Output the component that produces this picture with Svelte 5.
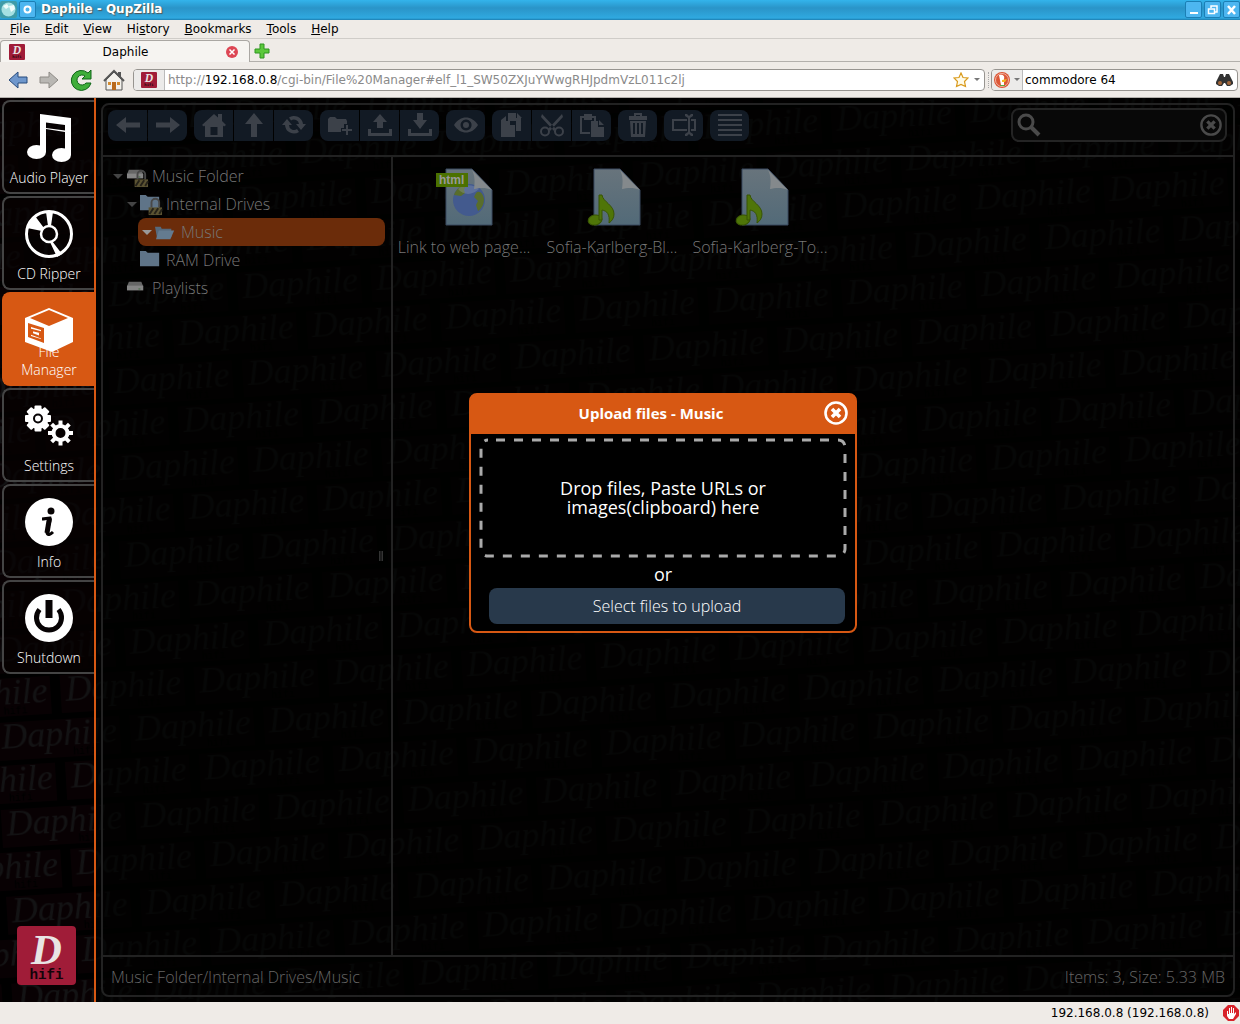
<script lang="ts">
  type Item = { label: string; icon: string };

  const menus = ['File', 'Edit', 'View', 'History', 'Bookmarks', 'Tools', 'Help'];
  // position of the underlined access key in each menu title
  const accessKey: Record<string, number> = { History: 2 };

  const sections: Item[] = [
    { label: 'Audio Player', icon: 'music' },
    { label: 'CD Ripper', icon: 'disc' },
    { label: 'File Manager', icon: 'box' },
    { label: 'Settings', icon: 'gears' },
    { label: 'Info', icon: 'info' },
    { label: 'Shutdown', icon: 'power' }
  ];

  const toolGroups = [
    ['back', 'forward'],
    ['home', 'up', 'reload'],
    ['newfolder', 'upload', 'download'],
    ['view'],
    ['copy', 'cut', 'paste'],
    ['trash'],
    ['rename'],
    ['list']
  ];

  const tree = [
    { label: 'Music Folder', level: 0, kind: 'drive', open: true, locked: true },
    { label: 'Internal Drives', level: 1, kind: 'folder', open: true, locked: true },
    { label: 'Music', level: 2, kind: 'openfolder', open: true, locked: false },
    { label: 'RAM Drive', level: 1, kind: 'folder', open: false, locked: false },
    { label: 'Playlists', level: 0, kind: 'drive', open: false, locked: false }
  ];

  const files = [
    { name: 'Link to web page...', kind: 'html' },
    { name: 'Sofia-Karlberg-Bl...', kind: 'audio' },
    { name: 'Sofia-Karlberg-To...', kind: 'audio' }
  ];

  const teeth = [0, 45, 90, 135, 180, 225, 270, 315];

  let current = $state('File Manager');
  let selected = $state('Music');
  let address = $state('');
  let query = $state('commodore 64');
  let dialogOpen = $state(true);
</script>

{#snippet favicon()}
  <svg class="favicon" viewBox="0 0 58 58" aria-hidden="true">
    <rect width="58" height="58" rx="4" fill="#a01c38" />
    <text x="29" y="37" class="logo-d" text-anchor="middle">D</text>
    <text x="29" y="52" class="logo-hifi" text-anchor="middle">hifi</text>
  </svg>
{/snippet}

{#snippet closeIcon(size: number)}
  <svg width={size} height={size} viewBox="0 0 24 24" fill="none" stroke="currentColor" aria-hidden="true">
    <circle cx="12" cy="12" r="10.5" stroke-width="2.6" />
    <path d="M8 8l8 8M16 8l-8 8" stroke-width="3.600" />
  </svg>
{/snippet}

{#snippet sectionIcon(name: string)}
  <svg class="section-icon" viewBox="0 0 48 48" aria-hidden="true" fill="#fff">
    {#if name === 'music'}
      <path fill-rule="evenodd" d="M15 0L46 4V41H40V18L21 15V38H15ZM21 8.500V14L40 16.500V11Z" />
      <ellipse cx="11.500" cy="38" rx="9.500" ry="7" />
      <ellipse cx="36.500" cy="41" rx="9.500" ry="7" />
    {:else if name === 'disc'}
      <circle cx="24" cy="24" r="22.500" fill="none" stroke="#fff" stroke-width="3" />
      <circle cx="24" cy="24" r="8" fill="none" stroke="#fff" stroke-width="2.500" />
      <path d="M21 2h7l-2 14h-3zM10 6L19 18 17 21 2 18zM27 31l10 13-5 3-7-15z" />
    {:else if name === 'box'}
      <path d="M24 2L48 12V36L27 46 0 36V12Z" />
      <path fill="#d75813" d="M24 4L43 12 24 20 5 12ZM3 17L19 22V37L3 31Z" />
      <path d="M6 21l10 3v9l-10-3z" />
      <path fill="#d75813" d="M6 21l10 3v9l-10-3z" opacity="0" />
      <path fill="none" stroke="#d75813" stroke-width="2" d="M7 24l8 2v5l-8-3z" />
    {:else if name === 'gears'}
      <circle cx="13" cy="16.500" r="10.500" />
      {#each teeth as a}
        <rect x="9.500" y="3.500" width="7" height="6" rx="1" transform="rotate({a} 13 16.500)" />
      {/each}
      <circle cx="13" cy="16.500" r="4" fill="#fff" stroke="#070304" stroke-width="2" />
      <circle cx="35.500" cy="31" r="7" fill="none" stroke="#fff" stroke-width="4" />
      {#each teeth as a}
        <rect x="33.500" y="18.500" width="4" height="6" transform="rotate({a} 35.500 31)" />
      {/each}
    {:else if name === 'info'}
      <circle cx="24" cy="24" r="24" />
      <circle cx="26" cy="13" r="3.500" fill="#070304" />
      <path fill="none" stroke="#070304" stroke-width="3" d="M17 21c3 0 5-1 8-1 1 5-4 11-3 15 1 3 4 1 6-1" />
      <path fill="none" stroke="#070304" stroke-width="5" d="M24.500 20L22 35" />
    {:else}
      <circle cx="24" cy="24" r="24" />
      <path fill="none" stroke="#070304" stroke-width="5" d="M14.500 15.500A12.500 12.500 0 1 0 33.500 15.500" />
      <path fill="#070304" d="M20.500 6h7v18h-7z" />
    {/if}
  </svg>
{/snippet}

{#snippet toolIcon(name: string)}
  <svg width="24" height="24" viewBox="0 0 24 24" fill="currentColor" stroke="none" aria-hidden="true">
    {#if name === 'back'}
      <path d="M0 12L10 4v5.500h14v5H10V20z" />
    {:else if name === 'forward'}
      <path d="M24 12L14 4v5.500H0v5h14V20z" />
    {:else if name === 'home'}
      <path fill-rule="evenodd" d="M0 12L12 1l4 3.500V1h4v7l4 4-2 1.500-1-1V24H3V12.500l-1 1zM8.500 14v8h7v-8z" />
    {:else if name === 'up'}
      <path d="M12 0l9 11h-6v13H9V11H3z" />
    {:else if name === 'reload'}
      <path d="M0 12l5-6 5 6H7a5 5 0 0 0 8 4l2 3A9 9 0 0 1 3 12zM24 11l-5 6-5-6h3a5 5 0 0 0-8-3.500L7 4.500A9 9 0 0 1 21 11z" />
    {:else if name === 'newfolder'}
      <path d="M0 6l2-2h5l2 2h9l1 2v3h-3v4h-3v4H1L0 19z" />
      <path d="M18 12h2v4h4v2h-4v4h-2v-4h-4v-2h4z" />
    {:else if name === 'upload'}
      <path d="M12 1l7 8h-4v6H9V9H5zM0 16h3v4h18v-4h3v7H0z" />
    {:else if name === 'download'}
      <path d="M9 0h6v7h4l-7 9-7-9h4zM0 16h3v4h18v-4h3v7H0z" />
    {:else if name === 'view'}
      <path fill-rule="evenodd" d="M0 12C6 2 18 2 24 12 18 22 6 22 0 12zM12 6.500a5.500 5.500 0 1 0 .1 0z" />
      <circle cx="12" cy="12" r="3" />
    {:else if name === 'copy'}
      <path d="M8 0h8v5h5v13h-5V8H8zM17 0l5 5h-5zM1 7l5-4v5h4v4h5v12H1z" />
    {:else if name === 'cut'}
      <path d="M2 1l14 15-2 2L1 4zM22 1L8 16l2 2L23 4z" />
      <g fill="none" stroke="currentColor" stroke-width="2">
        <circle cx="5" cy="18.500" r="4" />
        <circle cx="19" cy="18.500" r="4" />
      </g>
    {:else if name === 'paste'}
      <path d="M0 3h4V1h8v2h4v5h-2V5h-2v2H4V5H2v14h8v2H0z" />
      <path d="M11 8h7v6h6v10H11zM19 7l5 5h-5z" />
    {:else if name === 'trash'}
      <path fill-rule="evenodd" d="M3 3h5V0h8v3h5v4H3zM10 2v1h4V2zM4 8h16l-1 16H5zM7 10v11h2V10zm4 0v11h2V10zm4 0v11h2V10z" />
    {:else if name === 'rename'}
      <path fill-rule="evenodd" d="M0 6h15v2H2v8h13v2H0zM19 6h5v12h-5v-2h3V8h-3z" />
      <path d="M13 1h2l2 2 2-2h2v2l-3 2v14l3 2v2h-2l-2-2-2 2h-2v-2l3-2V5l-3-2z" />
    {:else}
      <path d="M0 1h24v2H0zM0 6h24v2H0zM0 11h24v2H0zM0 16h24v2H0zM0 21h24v2H0z" />
    {/if}
  </svg>
{/snippet}

{#snippet treeIcon(kind: string, locked: boolean)}
  <svg class="tree-icon" viewBox="0 0 24 24" aria-hidden="true">
    {#if kind === 'drive'}
      <path fill="#666" d="M3 5h13l2 5H1z" />
      <path fill="#858585" d="M1 9h17v5H1z" />
      <path fill="#3a6a3a" d="M13 12h2v1h-2z" />
    {:else if kind === 'folder'}
      <path fill="#5f7488" d="M0 2h6l2 2h12v14H0z" />
    {:else}
      <path fill="#566a7d" d="M0 6h6l1 2h10v9H2z" />
      <path fill="#647b90" d="M4 10h16l-4 9H1z" />
    {/if}
    {#if locked}
      <path fill="none" stroke="#484848" stroke-width="2" d="M12 15v-5a4 4 0 0 1 8 0v5" />
      <path fill="#5b5332" d="M9 15h14v8H9z" />
      <path stroke="#26231a" stroke-width="2" d="M10 22l4-6M15 22l4-6M20 22l3-5" />
    {/if}
  </svg>
{/snippet}

<div class="window">
  <header class="titlebar">
    <svg width="17" height="17" viewBox="0 0 17 17" aria-hidden="true">
      <rect width="17" height="17" rx="2" fill="#3f9ba8" />
      <circle cx="8.500" cy="8.500" r="7" fill="#a5e0e2" />
      <path fill="#effcfb" d="M3 5l4-2 2 3-3 2zM9 5l5-1 1 4-4 3z" />
    </svg>
    <button class="wm" aria-label="Window menu">
      <svg width="15" height="15" viewBox="0 0 15 15"><circle cx="7.500" cy="7.500" r="3" fill="none" stroke="#fff" stroke-width="2" /></svg>
    </button>
    <span class="title">Daphile - QupZilla</span>
    <button class="wm" aria-label="Minimize">
      <svg width="15" height="15" viewBox="0 0 15 15"><path d="M4 10h8v2H4z" fill="#fff" /></svg>
    </button>
    <button class="wm" aria-label="Restore">
      <svg width="15" height="15" viewBox="0 0 15 15" fill="none" stroke="#fff"><path d="M6 6V4h6v6h-2M3.500 7h6v4.500h-6z" stroke-width="1.500" /></svg>
    </button>
    <button class="wm" aria-label="Close">
      <svg width="15" height="15" viewBox="0 0 15 15"><path d="M4 4l7 8M11 4l-7 8" stroke="#fff" stroke-width="2.500" /></svg>
    </button>
  </header>

  <nav class="menubar" aria-label="Menu">
    {#each menus as menu}
      {@const k = accessKey[menu] ?? 0}
      <button>{menu.slice(0, k)}<u>{menu[k]}</u>{menu.slice(k + 1)}</button>
    {/each}
  </nav>

  <div class="tabs">
    <div class="tab">
      {@render favicon()}
      <span>Daphile</span>
      <button aria-label="Close tab">
        <svg width="12" height="12" viewBox="0 0 12 12"><circle cx="6" cy="6" r="6" fill="#dd4654" /><path d="M3.500 3.500l5 5M8.500 3.500l-5 5" stroke="#fff" stroke-width="1.500" /></svg>
      </button>
    </div>
    <button class="newtab" aria-label="New tab">
      <svg width="16" height="16" viewBox="0 0 16 16"><path d="M6 1h4v5h5v4h-5v5H6v-5H1V6h5z" fill="#5cc83c" stroke="#2f9420" /></svg>
    </button>
  </div>

  <div class="navbar">
    <button aria-label="Back">
      <svg width="20" height="20" viewBox="0 0 20 20"><path d="M1 10l9-8v5h9v6h-9v5z" fill="#6f97cc" stroke="#274a7c" /></svg>
    </button>
    <button aria-label="Forward">
      <svg width="20" height="20" viewBox="0 0 20 20"><path d="M19 10l-9-8v5H1v6h9v5z" fill="#b9b7b3" stroke="#8e8b86" /></svg>
    </button>
    <button aria-label="Reload">
      <svg width="22" height="22" viewBox="0 0 22 22"><path d="M21 1v9h-9l3-3a5 5 0 1 0 1 7h5A10 10 0 1 1 18 4z" fill="#3fae3a" stroke="#11661a" /></svg>
    </button>
    <button aria-label="Home">
      <svg width="22" height="22" viewBox="0 0 22 22">
        <path d="M15 3h3v6h-3z" fill="#555" />
        <path d="M3 11l8-8 8 8v10H3z" fill="#f3f1ec" stroke="#555" />
        <path d="M1 12L11 2l10 10" fill="none" stroke="#555" stroke-width="2" />
        <path d="M9 13h4v8H9z" fill="#b96a1d" /><path d="M5 13h3v3H5zM14 13h3v3h-3z" fill="#d48b30" />
      </svg>
    </button>
    <div class="field address">
      <span class="cap">{@render favicon()}</span>
      <div class="edit">
        <span class="url">http://<b>192.168.0.8</b>/cgi-bin/File%20Manager#elf_l1_SW50ZXJuYWwgRHJpdmVzL011c2lj</span>
        <input type="text" aria-label="Address" bind:value={address} />
      </div>
      <svg width="16" height="16" viewBox="0 0 16 16" aria-hidden="true"><path d="M8 1l2 4.500 5 .5-3.500 3.500 1 5L8 12.500 3.500 14.500l1-5L1 6l5-.5z" fill="#fffbe8" stroke="#d99a1c" stroke-width="1.200" /></svg>
      <span class="caret"></span>
    </div>
    <span class="grip"></span>
    <div class="field websearch">
      <span class="cap">
        <svg width="16" height="16" viewBox="0 0 16 16" aria-hidden="true">
          <circle cx="8" cy="8" r="8" fill="#dc5636" /><circle cx="8" cy="8" r="6.500" fill="none" stroke="#f1b5a3" />
          <path d="M5 3c4-1 6 1 5 4v6H7z" fill="#fff" /><path d="M8 8l5-1-2 3H8z" fill="#f5b820" /><path d="M6 13h5v1H6z" fill="#5aa83e" />
        </svg>
        <span class="caret"></span>
      </span>
      <input type="text" aria-label="Web search" bind:value={query} />
      <svg width="17" height="14" viewBox="0 0 17 14" aria-hidden="true">
        <path d="M4 1h3l1 3h1l1-3h3l4 8v2l-3 2h-3l-2-3H8l-2 3H3l-3-2V9z" fill="#333" />
        <circle cx="4" cy="10" r="2" fill="#a5673a" /><circle cx="13" cy="10" r="2" fill="#a5673a" />
      </svg>
    </div>
  </div>

  <main class="page">
    <svg class="wall" width="100%" height="100%" aria-hidden="true">
      <defs>
        <pattern id="bricks" width="134" height="87" patternUnits="userSpaceOnUse" patternTransform="translate(129 615) rotate(-3.500)">
          {#each [[0, 0], [67, 43], [-67, 43]] as [x, y]}
            <g transform="translate({x} {y})">
              <rect x="0" y="2" width="124" height="38" fill="#080103" />
              <text x="5" y="28" class="brick-name">Daphile</text>
              <text x="76" y="38" class="brick-hifi">hifi</text>
            </g>
          {/each}
        </pattern>
      </defs>
      <rect width="100%" height="100%" fill="url(#bricks)" />
    </svg>

    <nav class="sidebar" aria-label="Sections">
      {#each sections as s}
        <button class="section" class:active={s.label === current} onclick={() => (current = s.label)}>
          {@render sectionIcon(s.icon)}
          <span>{s.label}</span>
        </button>
      {/each}
      <a class="brand" href="#about" aria-label="Daphile">{@render favicon()}</a>
    </nav>

    <div class="content">
      <div class="manager">
        <div class="toolbar">
          {#each toolGroups as group}
            <div class="group">
              {#each group as tool}
                <button aria-label={tool}>{@render toolIcon(tool)}</button>
              {/each}
            </div>
          {/each}
          <div class="search">
            <svg width="24" height="24" viewBox="0 0 24 24" fill="none" stroke="currentColor" aria-hidden="true">
              <circle cx="9" cy="9" r="7" stroke-width="3" />
              <path d="M14 14l8 8" stroke-width="4" />
            </svg>
            <input type="text" aria-label="Search files" />
            <button aria-label="Clear search">{@render closeIcon(22)}</button>
          </div>
        </div>

        <div class="panes">
          <div class="tree">
            {#each tree as node}
              <button class="node level{node.level}" class:selected={node.label === selected} onclick={() => (selected = node.label)}>
                <span class="arrow" class:hidden={!node.open}></span>
                {@render treeIcon(node.kind, node.locked)}
                <span>{node.label}</span>
              </button>
            {/each}
            <span class="splitter"></span>
          </div>

          <div class="files">
            {#each files as file}
              <button class="file">
                <svg width="60" height="60" viewBox="0 0 60 60" aria-hidden="true">
                  <defs>
                    <linearGradient id="sheet" x1="0" y1="0" x2="0" y2="1">
                      <stop offset="0" stop-color="#68747c" /><stop offset="1" stop-color="#526a78" />
                    </linearGradient>
                  </defs>
                  <path d="M12 2h26l20 21v35H12z" fill="url(#sheet)" stroke="#3b4a61" />
                  {#if file.kind === 'html'}
                    <circle cx="35" cy="33" r="16" fill="#435a8e" />
                    <path d="M20 28c2-6 7-10 12-10l-2 5 1 3-4 3zM42 26c3-3 7 0 8 6 0 6-3 10-6 12l-2-6 2-4-4-4z" fill="#596d2b" />
                    <path d="M24 22c6-5 15-5 21 0-6 6-15 7-21 0z" fill="#9ba7bc" opacity=".3" />
                  {/if}
                  <path d="M38 3l20 20c-7-3-13-2-18-1 1-7 1-13-2-19z" fill="#84898c" />
                  {#if file.kind === 'html'}
                    <path d="M2 6h32v14H2z" fill="#4b7100" />
                    <text x="5" y="17" class="html-tag">html</text>
                  {:else}
                    <ellipse cx="13" cy="53" rx="7" ry="5" fill="#4f7508" stroke="#395505" transform="rotate(-12 13 53)" />
                    <path d="M17 28h3c1 7 12 10 12 19 0 4-2 7-5 9 1-9-2-12-7-13v10h-3z" fill="#4f7508" stroke="#395505" />
                  {/if}
                </svg>
                <span>{file.name}</span>
              </button>
            {/each}
          </div>
        </div>

        <footer class="status">
          <span>Music Folder/Internal Drives/Music</span>
          <span>Items: 3, Size: 5.33 MB</span>
        </footer>
      </div>

      {#if dialogOpen}
        <div class="dialog" role="dialog" aria-labelledby="dialog-title">
          <div class="dialog-head">
            <h2 id="dialog-title">Upload files - Music</h2>
            <button aria-label="Close dialog" onclick={() => (dialogOpen = false)}>{@render closeIcon(24)}</button>
          </div>
          <div class="dialog-body">
            <div class="drop">
              <svg width="100%" height="100%" aria-hidden="true">
                <rect class="dashes" rx="7" />
              </svg>
              <span>Drop files, Paste URLs or<br />images(clipboard) here</span>
            </div>
            <p>or</p>
            <button class="select">Select files to upload</button>
          </div>
        </div>
      {/if}
    </div>
  </main>

  <footer class="browser-status">
    <span>192.168.0.8 (192.168.0.8)</span>
    <svg width="16" height="16" viewBox="0 0 16 16" aria-hidden="true">
      <path d="M5 0h6l5 5v6l-5 5H5l-5-5V5z" fill="#d8232a" />
      <path d="M4 6h1v3h1V3h1v5h1V2h1v6h1V3h1v6l2-2v2l-3 5H6L4 11z" fill="#fff" />
    </svg>
  </footer>
</div>

<style>
  :global(body) {
    margin: 0;
    background: #000;
  }

  .window {
    display: flex;
    flex-direction: column;
    min-height: 100vh;
    font: 12px/16px 'DejaVu Sans', sans-serif;
    color: #000;
    background: #efebe7;
  }

  button,
  input {
    font: inherit;
    color: inherit;
    border: 0;
    padding: 0;
    margin: 0;
    background: none;
    min-width: 0;
  }

  input {
    outline: none;
  }

  svg {
    display: block;
    flex: none;
  }

  .titlebar {
    display: flex;
    align-items: center;
    gap: 2px;
    height: 20px;
    box-sizing: border-box;
    padding: 0 0 2px 0;
    background: linear-gradient(#33b4ec, #2a94c8 40%, #2fa9e0 90%, #1c7db0);
  }

  .title {
    flex: 1;
    padding-left: 3px;
    color: #fff;
    font-weight: bold;
    text-shadow: 1px 1px 1px #555;
  }

  .wm {
    border: 1px solid #1b7fb5;
    border-radius: 2px;
    background: #4db6f0;
  }

  .menubar {
    display: flex;
    gap: 15px;
    padding: 1px 10px;
    border-bottom: 1px solid #cfccc8;
  }

  .tabs {
    display: flex;
    height: 22px;
    border-bottom: 1px solid #b3b0ac;
  }

  .tab {
    display: flex;
    align-items: center;
    width: 229px;
    height: 21px;
    margin-top: 1px;
    padding: 0 11px 0 8px;
    border: 1px solid #aaa7a3;
    border-bottom: 0;
    border-radius: 4px 4px 0 0;
    background: #f6f4f1;
  }

  .tab span {
    flex: 1;
    text-align: center;
  }

  .favicon {
    width: 16px;
    height: 16px;
  }

  .logo-d {
    font: italic bold 42px 'Liberation Serif', serif;
    fill: #e8e4e4;
  }

  .logo-hifi {
    font: bold 14px 'Liberation Mono', monospace;
    fill: #12040a;
  }

  .newtab {
    padding: 2px 4px 0;
  }

  .navbar {
    display: flex;
    align-items: center;
    gap: 11px;
    height: 35px;
    padding: 0 2px 0 8px;
    border-bottom: 1px solid #b3b0ac;
  }

  .field {
    display: flex;
    align-items: center;
    gap: 5px;
    height: 20px;
    padding-right: 4px;
    border: 1px solid #979490;
    border-radius: 4px;
    background: #fff;
  }

  .address {
    flex: 1;
    min-width: 0;
    margin-left: -3px;
  }

  .websearch {
    width: 241px;
    margin-left: -9px;
  }

  .websearch input {
    flex: 1;
    margin-left: -3px;
  }

  .cap {
    display: flex;
    align-items: center;
    gap: 4px;
    align-self: stretch;
    padding: 0 2px;
    border-right: 1px solid #bbb;
    border-radius: 3px 0 0 3px;
    background: #ecebea;
  }

  .address .cap {
    padding: 0 7px;
  }

  .edit {
    display: grid;
    flex: 1;
    min-width: 0;
    margin-left: -2px;
  }

  .edit > * {
    grid-area: 1 / 1;
  }

  .url {
    color: #8a8a8a;
    white-space: nowrap;
    overflow: hidden;
  }

  .url b {
    color: #000;
    font-weight: normal;
  }

  .caret {
    border: 3px solid transparent;
    border-top-color: #777;
    border-bottom: 0;
  }

  .grip {
    height: 16px;
    margin-left: -8px;
    border-left: 1px dotted #aaa;
  }

  .page {
    position: relative;
    display: flex;
    flex: 1;
    background: #000;
    color: #777;
    font: 300 16px/20px 'Open Sans', 'Noto Sans', sans-serif;
  }

  .wall {
    position: absolute;
    inset: 0;
  }

  .brick-name {
    font: italic 36px 'Liberation Serif', serif;
    fill: #131314;
  }

  .brick-hifi {
    font: bold 10px 'Liberation Mono', monospace;
    fill: #000;
  }

  .sidebar {
    position: relative;
    display: flex;
    flex-direction: column;
    gap: 2px;
    width: 92px;
    padding: 2px 0 17px 2px;
    border-right: 2px solid #d75813;
  }

  .section {
    display: grid;
    height: 94px;
    box-sizing: border-box;
    padding: 12px 0 5px;
    border: 2px solid #444;
    border-right: 0;
    border-radius: 8px 0 0 8px;
    background: rgba(5, 1, 2, 0.7);
    color: #fff;
    font-size: 14px;
    line-height: 18px;
    cursor: pointer;
  }

  .section > * {
    grid-area: 1 / 1;
  }

  .section span {
    align-self: end;
    padding: 0 4px;
  }

  .section.active {
    border-color: #d75813;
    background: #d75813;
  }

  .section.active span {
    padding: 0 16px;
  }

  .section-icon {
    z-index: 1;
    width: 48px;
    height: 48px;
    justify-self: center;
    align-self: start;
  }

  .brand {
    margin: auto 18px 0 15px;
  }

  .brand .favicon {
    width: 59px;
    height: 59px;
  }

  .content {
    position: relative;
    display: flex;
    flex: 1;
    min-width: 0;
    padding: 5px;
    background: rgba(0, 1, 0, 0.65);
  }

  .manager {
    display: flex;
    flex: 1;
    flex-direction: column;
    min-width: 0;
    border: 2px solid #222;
    border-radius: 8px;
  }

  .toolbar {
    display: flex;
    align-items: center;
    gap: 7px;
    height: 40px;
    padding: 0 6px 10px 5px;
    border-bottom: 2px solid #222;
  }

  .group {
    display: flex;
    gap: 1px;
    overflow: hidden;
    border-radius: 8px;
  }

  .group button {
    display: grid;
    place-items: center;
    width: 39px;
    height: 31px;
    background: #121a24;
    color: #3c4149;
  }

  .search {
    display: flex;
    align-items: center;
    gap: 6px;
    width: 205px;
    height: 30px;
    margin-left: auto;
    padding: 0 3px 0 4px;
    border: 2px solid #242424;
    border-radius: 8px;
    background: #080808;
    color: #4a4a4a;
  }

  .search input {
    flex: 1;
  }

  .panes {
    display: flex;
    flex: 1;
  }

  .tree {
    position: relative;
    width: 282px;
    padding: 5px 6px 0 0;
    border-right: 2px solid #222;
  }

  .node {
    display: flex;
    align-items: center;
    gap: 3px;
    width: 100%;
    height: 28px;
    padding-left: 10px;
    text-align: left;
    border-radius: 8px;
  }

  .level1 {
    padding-left: 24px;
  }

  .level2 {
    width: auto;
    margin-left: 35px;
    padding-left: 4px;
  }

  .selected {
    width: 247px;
    background: #6b2c0a;
  }

  .arrow {
    width: 0;
    border: 5px solid transparent;
    border-top-color: #444;
    border-bottom: 0;
  }

  .selected .arrow {
    border-top-color: #999;
  }

  .arrow.hidden {
    visibility: hidden;
  }

  .tree-icon {
    width: 23px;
    height: 23px;
  }

  .splitter {
    position: absolute;
    top: 50%;
    right: 8px;
    width: 4px;
    height: 10px;
    box-sizing: border-box;
    border: 1px solid #333;
    border-width: 0 1px;
    background: #1c1c1c;
    transform: translateY(-50%);
  }

  .files {
    display: flex;
    flex: 1;
    align-items: flex-start;
    margin-left: -3px;
    padding-top: 10px;
  }

  .file {
    display: flex;
    flex-direction: column;
    align-items: center;
    gap: 10px;
    width: 148px;
    white-space: nowrap;
  }

  .html-tag {
    font: bold 12px 'Liberation Sans', sans-serif;
    fill: #999;
  }

  .status {
    display: flex;
    justify-content: space-between;
    padding: 10px 8px 8px;
    border-top: 2px solid #222;
    color: #666;
  }

  .dialog {
    position: absolute;
    top: 295px;
    left: 0;
    right: 10px;
    width: 384px;
    margin: 0 auto;
    border: 2px solid #d75813;
    border-radius: 8px;
    background: #000;
    color: #fff;
  }

  .dialog-head {
    display: flex;
    align-items: center;
    height: 39px;
    padding: 0 7px;
    background: #d75813;
    border-radius: 4px 4px 0 0;
  }

  h2 {
    flex: 1;
    margin: 0;
    padding-bottom: 4px;
    font-size: 15px;
    font-weight: 700;
    text-align: center;
  }

  .dialog-head button {
    height: 24px;
    margin-bottom: 3px;
  }

  .dialog-body {
    display: flex;
    flex-direction: column;
    padding: 4px 8px 7px;
    text-align: center;
    font-weight: 500;
    font-size: 18px;
    line-height: 19px;
  }

  .drop {
    display: grid;
    place-items: center;
    height: 120px;
  }

  .drop > * {
    grid-area: 1 / 1;
  }

  .dashes {
    x: 2px;
    y: 2px;
    width: calc(100% - 4px);
    height: calc(100% - 4px);
    fill: none;
    stroke: #aaa;
    stroke-width: 3px;
    stroke-dasharray: 9 9;
    stroke-dashoffset: -8;
  }

  p {
    margin: 7px 0 4px;
  }

  .select {
    height: 36px;
    margin: 0 2px 0 10px;
    border-radius: 8px;
    background: #28394b;
    font-weight: 300;
    font-size: 16px;
  }

  .browser-status {
    display: flex;
    align-items: center;
    justify-content: flex-end;
    gap: 14px;
    height: 22px;
    padding-right: 1px;
  }
</style>
